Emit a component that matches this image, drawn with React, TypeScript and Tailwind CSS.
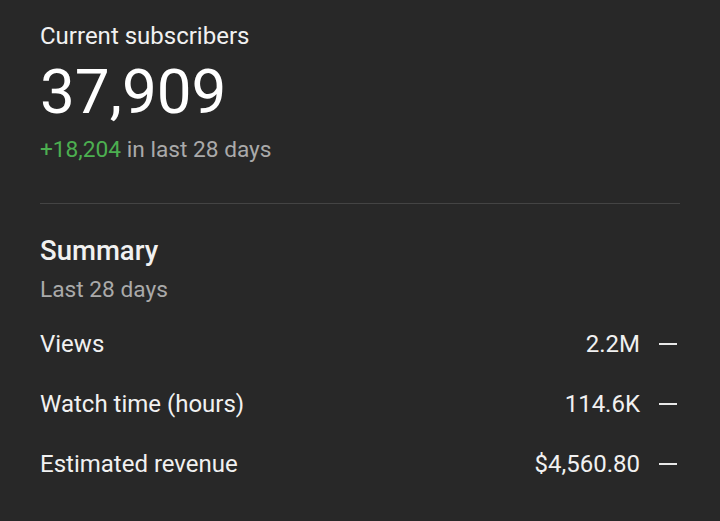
export default function App() {
  const rows = [
    { label: "Views", value: "2.2M" },
    { label: "Watch time (hours)", value: "114.6K" },
    { label: "Estimated revenue", value: "$4,560.80" },
  ];
  return (
    <div
      className="w-[720px] h-[521px] bg-[#282828] text-white px-[40px] pt-[20px] overflow-hidden"
      style={{ fontFamily: "Roboto, 'Noto Sans', sans-serif" }}
    >
      <div className="text-[24px] leading-[32px] text-[#f1f1f1]">Current subscribers</div>
      <div className="text-[62px] leading-[80px] text-white">37,909</div>
      <div className="text-[22.7px] leading-[36px]">
        <span className="text-[#4caf50]">+18,204</span>
        <span className="text-[#aaaaaa]"> in last 28 days</span>
      </div>
      <div className="h-px bg-[#444444] mt-[35px]" />
      <div className="text-[27.5px] leading-[40px] font-medium mt-[27px] text-[#f1f1f1]">Summary</div>
      <div className="text-[22.7px] leading-[38px] text-[#aaaaaa]">Last 28 days</div>
      <div className="mt-[5px] flex flex-col">
        {rows.map((r) => (
          <div key={r.label} className="flex items-center h-[60px] text-[24px] text-[#f1f1f1]">
            <span className="flex-1">{r.label}</span>
            <span>{r.value}</span>
            <span className="w-[18px] h-[2px] bg-[#e8e8e8] ml-[19px] mr-[3px]" />
          </div>
        ))}
      </div>
    </div>
  );
}
